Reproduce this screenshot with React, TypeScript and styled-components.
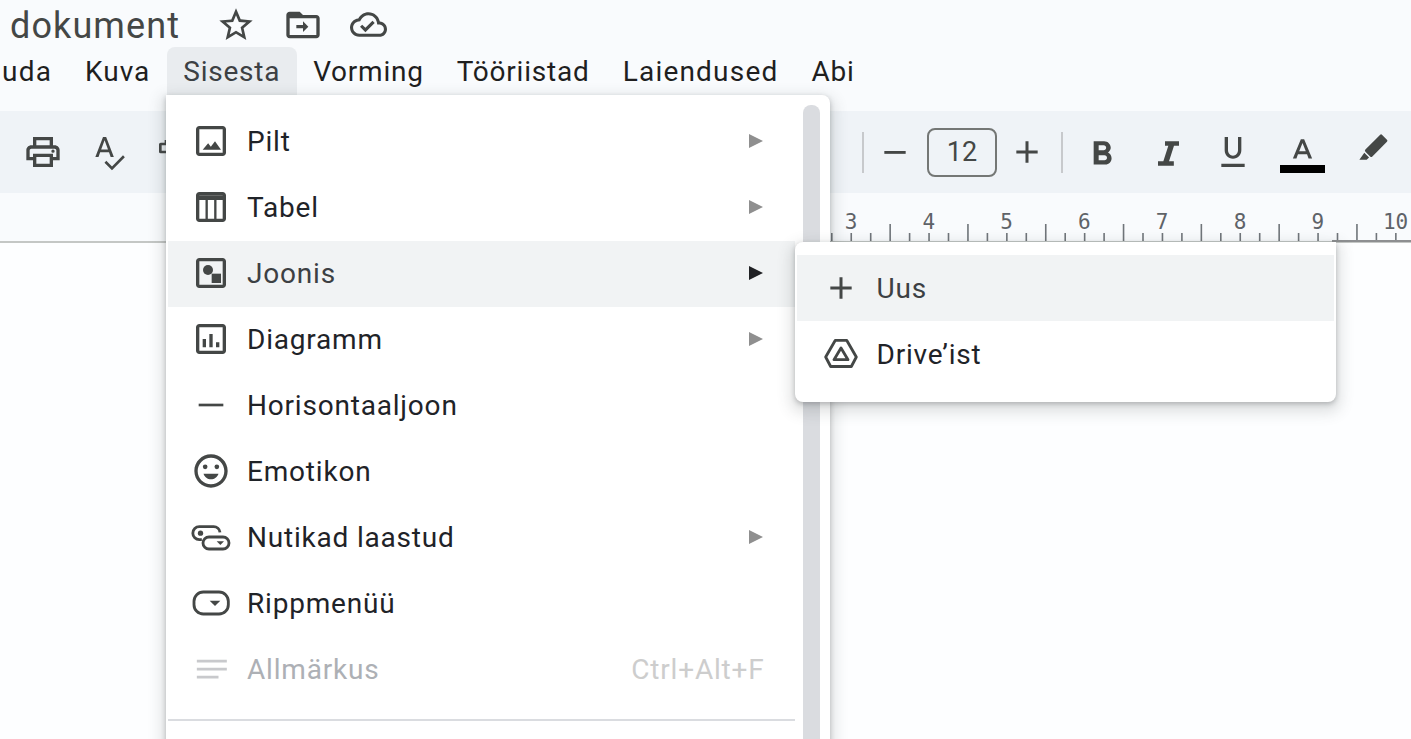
import React from "react";
import styled, { createGlobalStyle } from "styled-components";

const GlobalStyle = createGlobalStyle`
  html, body {
    margin: 0;
    padding: 0;
    height: 100%;
    overflow: hidden;
    background: #fdfeff;
    font-family: Roboto, "Liberation Sans", sans-serif;
  }
`;

const Page = styled.div`
  position: relative;
  width: 1411px;
  height: 739px;
  overflow: hidden;
  background: #fdfeff;
`;

const Top = styled.div`
  background: #f9fbfd;
`;

const TitleRow = styled.div`
  display: flex;
  align-items: center;
  box-sizing: border-box;
  height: 47px;
  padding: 2px 0 0 10px;
  color: #444746;
`;

const DocTitle = styled.div`
  font-size: 36px;
  letter-spacing: 1.1px;
  line-height: 45px;
  width: 206px;
  padding-top: 3px;
`;

const TitleIcons = styled.div`
  display: flex;
  align-items: center;
  gap: 27px;
`;

const Icon = styled.svg<{ $size?: number }>`
  display: block;
  flex: none;
  width: ${(p) => p.$size ?? 40}px;
  height: ${(p) => p.$size ?? 40}px;
  fill: currentColor;
`;

const MenuBar = styled.div`
  display: flex;
  height: 48px;
  margin-left: -14.5px;
`;

const MenuTab = styled.div<{ $open?: boolean; $spacing?: number }>`
  display: flex;
  align-items: center;
  padding: 0 16.5px;
  font-size: 28px;
  letter-spacing: ${(p) => p.$spacing ?? 0.85}px;
  color: ${(p) => (p.$open ? "#3c4043" : "#1f1f1f")};
  background: ${(p) => (p.$open ? "#e9ecef" : "transparent")};
  border-radius: 8px 8px 0 0;
`;

const Toolbar = styled.div`
  display: flex;
  align-items: center;
  height: 82px;
  margin-top: 16px;
  padding: 0 18px 0 23px;
  background: #eff3f7;
  color: #444746;
`;

const LeftTools = styled.div`
  display: flex;
  align-items: center;
  gap: 25px;
`;

const RightTools = styled.div`
  display: flex;
  align-items: center;
  margin-left: auto;
`;

const Divider = styled.div<{ $ml?: number }>`
  width: 2px;
  height: 41px;
  margin-left: ${(p) => p.$ml ?? 0}px;
  background: #c7c9cc;
`;

const Tool = styled.div<{ $ml?: number }>`
  display: flex;
  align-items: center;
  justify-content: center;
  width: 40px;
  margin-left: ${(p) => p.$ml ?? 0}px;
`;

const ColorTool = styled(Tool)`
  flex-direction: column;
  box-sizing: border-box;
  width: 45px;
  height: 46px;
  padding-top: 6px;
  justify-content: flex-start;
`;

const ColorBar = styled.div`
  flex: none;
  width: 45px;
  height: 8px;
  margin-top: -3px;
  background: #000;
`;

const SizeBox = styled.div`
  display: flex;
  align-items: center;
  justify-content: center;
  box-sizing: border-box;
  width: 70px;
  height: 49px;
  margin-left: 12px;
  border: 2px solid #747775;
  border-radius: 8px;
  font-size: 27px;
  color: #444746;
`;

const RulerRow = styled.div`
  height: 48px;
  border-bottom: 2px solid #c4c7c5;
`;

const RulerSvg = styled.svg`
  display: block;
  width: 1411px;
  height: 49px;
  font-family: "DejaVu Sans Mono", monospace;
  font-size: 21px;
  fill: #5f6368;
`;

const MenuPanel = styled.div`
  position: absolute;
  left: 166px;
  top: 95px;
  box-sizing: border-box;
  width: 664px;
  height: 700px;
  padding: 14px 35px 0 2px;
  background: #fff;
  border-radius: 0 8px 8px 8px;
  box-shadow: 0 2px 5px rgba(60, 64, 67, 0.3), 0 6px 14px 5px rgba(60, 64, 67, 0.15);
`;

const ScrollThumb = styled.div`
  position: absolute;
  right: 10px;
  top: 10px;
  width: 17px;
  height: 680px;
  background: #dadce0;
  border-radius: 8px;
`;

const Row = styled.div<{ $active?: boolean; $disabled?: boolean }>`
  display: flex;
  align-items: center;
  height: 66px;
  padding: 0 32px 2px 23px;
  box-sizing: border-box;
  font-size: 28px;
  letter-spacing: 0.8px;
  color: ${(p) => (p.$disabled ? "#adb0b5" : p.$active ? "#3c4043" : "#1f2328")};
  background: ${(p) => (p.$active ? "#f1f3f4" : "transparent")};
`;

const RowIcon = styled.span<{ $disabled?: boolean }>`
  display: flex;
  margin-right: 16px;
  color: ${(p) => (p.$disabled ? "#c8c9cc" : "#444746")};
`;

const RowLabel = styled.span`
  flex: 1;
`;

const Arrow = styled.span<{ $active?: boolean }>`
  width: 0;
  height: 0;
  border-style: solid;
  border-width: 7px 0 7px 14px;
  border-color: transparent transparent transparent ${(p) => (p.$active ? "#202124" : "#8f8f8f")};
`;

const Shortcut = styled.span`
  margin-right: -1.5px;
  color: #cdcdcd;
`;

const MenuRule = styled.div`
  height: 2px;
  margin-top: 16px;
  background: #dadce0;
`;

const SubPanel = styled.div`
  position: absolute;
  left: 795px;
  top: 242px;
  box-sizing: border-box;
  width: 541px;
  height: 160px;
  padding: 13px 2px;
  background: #fff;
  border-radius: 8px;
  border-top-right-radius: 0;
  box-shadow: 0 2px 5px rgba(60, 64, 67, 0.3), 0 6px 14px 5px rgba(60, 64, 67, 0.15);
`;

const SubRow = styled(Row)`
  padding-left: 23.5px;
  padding-bottom: 0;
`;

const paths = {
  star: "M22 9.24l-7.19-.62L12 2 9.19 8.63 2 9.24l5.46 4.73L5.82 21 12 17.27 18.18 21l-1.63-7.03L22 9.24zM12 15.4l-3.76 2.27 1-4.28-3.32-2.88 4.38-.38L12 6.1l1.71 4.04 4.38.38-3.32 2.88 1 4.28L12 15.4z",
  folder: "M20 6h-8l-2-2H4c-1.1 0-2 .9-2 2v12c0 1.1.9 2 2 2h16c1.1 0 2-.9 2-2V8c0-1.1-.9-2-2-2zm0 12H4V8h16v10zM12 9.8v2.2H8v2h4v2.2l3.2-3.2z",
  cloud: "M19.35 10.04C18.67 6.59 15.64 4 12 4 9.11 4 6.6 5.64 5.35 8.04 2.34 8.36 0 10.91 0 14c0 3.31 2.69 6 6 6h13c2.76 0 5-2.24 5-5 0-2.64-2.05-4.78-4.65-4.96zM19 18H6c-2.21 0-4-1.79-4-4 0-2.05 1.53-3.76 3.56-3.97l1.07-.11.5-.95C8.08 7.14 9.94 6 12 6c2.62 0 4.88 1.86 5.39 4.43l.3 1.5 1.53.11c1.56.1 2.78 1.41 2.78 2.96 0 1.65-1.35 3-3 3zm-9-3.82l-2.09-2.09L6.5 13.5 10 17l6.01-6.01-1.41-1.41z",
  print: "M19 8h-1V3H6v5H5c-1.66 0-3 1.34-3 3v6h4v4h12v-4h4v-6c0-1.66-1.34-3-3-3zM8 5h8v3H8V5zm8 12v2H8v-4h8v2zm2-2v-2H6v2H4v-4c0-.55.45-1 1-1h14c.55 0 1 .45 1 1v4h-2zM18 10.5a1 1 0 1 0 0 2 1 1 0 0 0 0-2z",
  spell: "M13.6 15h1.9L10.9 3H9L4.4 15h1.9l1-2.8h5.3zm-5.7-4.5L9.95 5l2.05 5.5zM21 14l-6.6 6.7-3.4-3.4-1.1 1.1 4.5 4.5 7.7-7.7z",
  bold: "M15.6 10.79c.97-.67 1.65-1.77 1.65-2.79 0-2.26-1.75-4-4-4H7v14h7.04c2.09 0 3.71-1.7 3.71-3.79 0-1.52-.86-2.82-2.15-3.42zM10 6.5h3c.83 0 1.5.67 1.5 1.5s-.67 1.5-1.5 1.5h-3v-3zm3.5 9H10v-3h3.5c.83 0 1.5.67 1.5 1.5s-.67 1.5-1.5 1.5z",
  italic: "M10.2 5.6h8.4v2.6h-3l-3 9.4h2.9v2.6H6v-2.6h3.2l3-9.4h-2z",
  underline: "M12 16c2.9 0 5-2.2 5-5V3h-2v8c0 1.8-1.3 3.2-3 3.2S9 12.8 9 11V3H7v8c0 2.8 2.1 5 5 5zm-7 3v2h14v-2H5z",
  color: "M10.8 3L5 17h2.6l1.1-3h6.6l1.1 3H19L13.2 3h-2.4zM9.6 11.8L12 5.9l2.4 5.9z",
  pen: "M16.4 1.2a1 1 0 0 1 1.4 0l3 3a1 1 0 0 1 0 1.4L11.6 14.8a1 1 0 0 1-1.4 0L7.2 11.8a1 1 0 0 1 0-1.4zM6.5 12.5l3 3-1.5 1.4H3.4z",
  image: "M19 5v14H5V5h14m0-2H5c-1.1 0-2 .9-2 2v14c0 1.1.9 2 2 2h14c1.1 0 2-.9 2-2V5c0-1.1-.9-2-2-2zm-4.6 9.2l-2.5 3.2-1.6-2L7 17.2h11z",
  chart: "M9 17H7v-5h2v5zm4 0h-2V9h2v8zm4 0h-2v-3h2v3zm2 2H5V5h14v14zm0-16H5c-1.1 0-2 .9-2 2v14c0 1.1.9 2 2 2h14c1.1 0 2-.9 2-2V5c0-1.1-.9-2-2-2z",
  frame: "M19 5v14H5V5h14m0-2H5c-1.1 0-2 .9-2 2v14c0 1.1.9 2 2 2h14c1.1 0 2-.9 2-2V5c0-1.1-.9-2-2-2z",
  face: "M12 2C6.47 2 2 6.47 2 12s4.47 10 10 10 10-4.48 10-10S17.53 2 12 2zm0 18c-4.41 0-8-3.59-8-8s3.59-8 8-8 8 3.59 8 8-3.59 8-8 8zM7.5 13.6h9c-.7 2-2.4 3.4-4.5 3.4s-3.8-1.4-4.5-3.4z",
};

const P = ({ d, size, viewBox }: { d: string; size?: number; viewBox?: string }) => (
  <Icon $size={size} viewBox={viewBox ?? "0 0 24 24"}>
    <path d={d} />
  </Icon>
);

const Stroked = styled.g`
  fill: none;
  stroke: currentColor;
  stroke-width: 1.7;
  stroke-linejoin: round;
`;

const iconTable = (
  <Icon viewBox="0 0 24 24">
    <path d={paths.frame} />
    <path d="M4 5h16v2.8H4zM8.7 7h1.4v13H8.7zM13.9 7h1.4v13h-1.4z" />
  </Icon>
);

const iconDrawing = (
  <Icon viewBox="0 0 24 24">
    <path d={paths.frame} />
    <circle cx="10.2" cy="10.2" r="3" />
    <rect x="12.4" y="12.4" width="5.6" height="5.6" />
  </Icon>
);

const iconLine = (
  <Icon viewBox="0 0 24 24">
    <rect x="4.6" y="11.2" width="14.8" height="1.6" />
  </Icon>
);

const iconEmoji = (
  <Icon viewBox="0 0 24 24">
    <path d={paths.face} />
    <circle cx="8.5" cy="9.5" r="1.4" />
    <circle cx="15.5" cy="9.5" r="1.4" />
  </Icon>
);

const iconChips = (
  <Icon viewBox="0 0 24 24">
    <Stroked>
      <path d="M6.5 13.6H5a3.9 3.9 0 0 1 0-7.8h8.6a3.9 3.9 0 0 1 3.8 3.4" />
      <rect x="7.2" y="12" width="15.6" height="7.2" rx="3.6" />
    </Stroked>
    <circle cx="5.7" cy="9.7" r="1.6" />
    <path d="M15.4 14.6h4.4l-2.2 2.2z" />
  </Icon>
);

const iconDropdown = (
  <Icon viewBox="0 0 24 24">
    <Stroked>
      <rect x="1.8" y="5.4" width="20.6" height="13.2" rx="5.6" />
    </Stroked>
    <path d="M11.2 10.6h6.4l-3.2 3.2z" />
  </Icon>
);

const iconNote = (
  <Icon viewBox="0 0 24 24">
    <path d="M3.5 6.4h18v1.7h-18zM3.5 11.2h18v1.7h-18zM3.5 16h13v1.7h-13z" />
  </Icon>
);

const iconPlus = (
  <Icon viewBox="0 0 24 24">
    <path d="M18.4 12.9h-5.5v5.5h-1.8v-5.5H5.6v-1.8h5.5V5.6h1.8v5.5h5.5z" />
  </Icon>
);

const iconDrive = (
  <Icon viewBox="0 0 24 24">
    <Stroked>
      <path d="M8.6 3.8h6.8l5.8 10-3 5.7H5.8l-3-5.7z" />
      <path d="M12 8.4l4.2 7H7.8z" />
    </Stroked>
  </Icon>
);

const iconPaint = (
  <Icon viewBox="0 0 24 24">
    <path d="M3.6 7.4a1 1 0 0 1 1-1H7V4.8h13v8H4.6a1 1 0 0 1-1-1zM5.2 8v3.2H18V6.4H8.6V8z" />
  </Icon>
);

type Item = {
  label: string;
  icon: React.ReactNode;
  arrow?: boolean;
  active?: boolean;
  disabled?: boolean;
  shortcut?: string;
};

const items: Item[] = [
  { label: "Pilt", icon: <P d={paths.image} />, arrow: true },
  { label: "Tabel", icon: iconTable, arrow: true },
  { label: "Joonis", icon: iconDrawing, arrow: true, active: true },
  { label: "Diagramm", icon: <P d={paths.chart} />, arrow: true },
  { label: "Horisontaaljoon", icon: iconLine },
  { label: "Emotikon", icon: iconEmoji },
  { label: "Nutikad laastud", icon: iconChips, arrow: true },
  { label: "Rippmenüü", icon: iconDropdown },
  { label: "Allmärkus", icon: iconNote, disabled: true, shortcut: "Ctrl+Alt+F" },
];

const tabs: { label: string; spacing?: number }[] = [
  { label: "uda", spacing: 1.2 },
  { label: "Kuva", spacing: 1 },
  { label: "Sisesta", spacing: 0.75 },
  { label: "Vorming", spacing: 0.75 },
  { label: "Tööriistad", spacing: 0.8 },
  { label: "Laiendused", spacing: 1.2 },
  { label: "Abi" },
];

const rulerNumbers = [3, 4, 5, 6, 7, 8, 9, 10];
const tickStep = 19.45;
const ticks = Array.from({ length: 30 }, (_, i) => i);

function Ruler() {
  return (
    <RulerSvg viewBox="0 0 1411 49">
      {ticks.map((i) => {
        const x = 831 + i * tickStep;
        const tall = i % 4 === 3;
        return (
          <rect key={i} x={x} y={tall ? 31 : 40} width="1.6" height={tall ? 17 : 8} fill="#70757a" />
        );
      })}
      {rulerNumbers.map((n, i) => (
        <text key={n} x={851 + i * 77.8} y="35.5" textAnchor="middle">
          {n}
        </text>
      ))}
      <rect x="1332" y="47" width="79" height="2" fill="#8d8f91" />
    </RulerSvg>
  );
}

export default function App() {
  return (
    <Page>
      <GlobalStyle />
      <Top>
        <TitleRow>
          <DocTitle>dokument</DocTitle>
          <TitleIcons>
            <P d={paths.star} />
            <P d={paths.folder} />
            <P d={paths.cloud} size={37} />
          </TitleIcons>
        </TitleRow>
        <MenuBar>
          {tabs.map((t) => (
            <MenuTab key={t.label} $open={t.label === "Sisesta"} $spacing={t.spacing}>
              {t.label}
            </MenuTab>
          ))}
        </MenuBar>
        <Toolbar>
          <LeftTools>
            <P d={paths.print} />
            <P d={paths.spell} />
            {iconPaint}
          </LeftTools>
          <RightTools>
            <Divider />
            <Tool $ml={11}>
              <Icon viewBox="0 0 24 24">
                <rect x="5.6" y="11.4" width="12.8" height="1.7" />
              </Icon>
            </Tool>
            <SizeBox>12</SizeBox>
            <Tool $ml={10}>{iconPlus}</Tool>
            <Divider $ml={14} />
            <Tool $ml={19}>
              <P d={paths.bold} viewBox="0 -1.5 24 24" />
            </Tool>
            <Tool $ml={26}>
              <P d={paths.italic} />
            </Tool>
            <Tool $ml={25}>
              <P d={paths.underline} />
            </Tool>
            <ColorTool $ml={27}>
              <P d={paths.color} size={33} />
              <ColorBar />
            </ColorTool>
            <Tool $ml={28}>
              <P d={paths.pen} size={38} />
            </Tool>
          </RightTools>
        </Toolbar>
        <RulerRow>
          <Ruler />
        </RulerRow>
      </Top>

      <MenuPanel>
        <ScrollThumb />
        {items.map((it) => (
          <Row key={it.label} $active={it.active} $disabled={it.disabled}>
            <RowIcon $disabled={it.disabled}>{it.icon}</RowIcon>
            <RowLabel>{it.label}</RowLabel>
            {it.arrow && <Arrow $active={it.active} />}
            {it.shortcut && <Shortcut>{it.shortcut}</Shortcut>}
          </Row>
        ))}
        <MenuRule />
      </MenuPanel>

      <SubPanel>
        <SubRow $active>
          <RowIcon>{iconPlus}</RowIcon>
          <RowLabel>Uus</RowLabel>
        </SubRow>
        <SubRow>
          <RowIcon>{iconDrive}</RowIcon>
          <RowLabel>Drive’ist</RowLabel>
        </SubRow>
      </SubPanel>
    </Page>
  );
}
